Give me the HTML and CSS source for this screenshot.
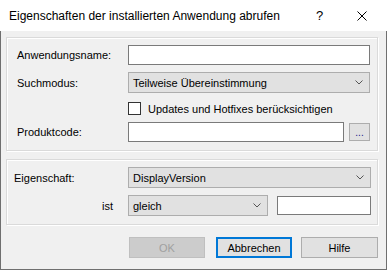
FILE: index.html
```html
<!DOCTYPE html>
<html lang="de">
<head>
<meta charset="utf-8">
<title>Eigenschaften der installierten Anwendung abrufen</title>
<link rel="stylesheet" href="styles.css">
</head>
<body>
<div class="window">
  <div class="titlebar">
    <span class="title">Eigenschaften der installierten Anwendung abrufen</span>
    <span class="help">?</span>
    <svg class="close" width="10" height="10" viewBox="0 0 10 10"><path d="M0.5 0.5 L9.5 9.5 M9.5 0.5 L0.5 9.5" stroke="#000" stroke-width="1" fill="none"/></svg>
  </div>
  <div class="client">
    <div class="group g1">
      <div class="row r1">
        <span class="lbl">Anwendungsname:</span>
        <div class="textbox w-full"></div>
      </div>
      <div class="row r2">
        <span class="lbl">Suchmodus:</span>
        <div class="combo w-full"><span>Teilweise Übereinstimmung</span><svg class="chev" width="8" height="5" viewBox="0 0 8 5"><path d="M0.5 0.5 L4 4 L7.5 0.5" stroke="#555" fill="none"/></svg></div>
      </div>
      <div class="row r3">
        <span class="lbl"></span>
        <div class="check"></div>
        <span class="checklbl">Updates und Hotfixes berücksichtigen</span>
      </div>
      <div class="row r4">
        <span class="lbl">Produktcode:</span>
        <div class="textbox w-code"></div>
        <div class="dots">...</div>
      </div>
    </div>
    <div class="group g2">
      <div class="row r5">
        <span class="lbl lbl2">Eigenschaft:</span>
        <div class="combo w-full2"><span>DisplayVersion</span><svg class="chev" width="8" height="5" viewBox="0 0 8 5"><path d="M0.5 0.5 L4 4 L7.5 0.5" stroke="#555" fill="none"/></svg></div>
      </div>
      <div class="row r6">
        <span class="lbl lbl-ist">ist</span>
        <div class="combo w-op"><span>gleich</span><svg class="chev" width="8" height="5" viewBox="0 0 8 5"><path d="M0.5 0.5 L4 4 L7.5 0.5" stroke="#555" fill="none"/></svg></div>
        <div class="textbox w-val"></div>
      </div>
    </div>
    <div class="buttons">
      <div class="btn disabled">OK</div>
      <div class="btn default">Abbrechen</div>
      <div class="btn help-btn">Hilfe</div>
    </div>
  </div>
</div>
</body>
</html>
```
FILE: styles.css
```css
* { box-sizing: border-box; }
html, body { margin: 0; padding: 0; background: #f0f0f0; }
body {
  font-family: "Liberation Sans", Arial, sans-serif;
  font-size: 11px;
  color: #000;
}
.window {
  width: 387px;
  height: 270px;
  background: #f0f0f0;
  border: 1px solid #6f6f6f;
  border-top: none;
  display: flex;
  flex-direction: column;
}
.titlebar {
  height: 31px;
  background: #fff;
  display: flex;
  align-items: center;
  padding-left: 8px;
  margin: 0 -1px;
  border-left: 1px solid #fff;
  border-right: 1px solid #fff;
}
.title {
  font-family: "Liberation Sans", Arial, sans-serif;
  font-size: 12px;
  color: #000;
  flex: none;
  padding-top: 1px;
}
.help {
  font-family: "Liberation Sans", Arial, sans-serif;
  font-size: 13px;
  width: 10px;
  margin-left: auto;
  margin-right: 31px;
}
.close { flex: none; margin-right: 19px; }
.client {
  padding: 6px 8px 0 5px;
  display: flex;
  flex-direction: column;
}
.group {
  border: 1px solid #dadada;
  box-shadow: inset 1px 1px 0 #fff, 1px 1px 0 #fff;
  width: 372px;
}
.g1 { height: 114px; padding-top: 7px; }
.g2 { height: 66px; margin-top: 8px; padding-top: 7px; }
.row { display: flex; align-items: center; }
.r1 { height: 20px; }
.r2 { height: 21px; margin-top: 7px; }
.r3 { height: 13px; margin-top: 9px; }
.r4 { height: 20px; margin-top: 7px; }
.r5 { height: 21px; }
.r6 { height: 21px; margin-top: 7px; }
.lbl {
  width: 121px;
  padding-left: 10px;
  flex: none;
}
.lbl2 { padding-left: 7px; }
.lbl-ist { text-align: right; padding-right: 15px; }
.textbox {
  height: 20px;
  background: #fff;
  border: 1px solid #7a7a7a;
}
.w-full { width: 242px; }
.w-code { width: 216px; }
.w-full2 { width: 243px; }
.w-op { width: 140px; }
.w-val { width: 94px; height: 19px; margin-left: 9px; }
.combo {
  height: 21px;
  background: #e1e1e1;
  border: 1px solid #adadad;
  display: flex;
  align-items: center;
  padding-left: 4px;
  padding-right: 6px;
}
.combo span { flex: 1; }
.chev { flex: none; }
.check {
  width: 13px;
  height: 13px;
  background: #fff;
  border: 1px solid #333;
}
.checklbl { margin-left: 7px; }
.dots {
  width: 21px;
  height: 18px;
  margin-left: 5px;
  background: #e1e1e1;
  border: 1px solid #adadad;
  text-align: center;
  line-height: 18px;
  color: #1a1a8a;
  font-size: 10px;
}
.buttons {
  display: flex;
  justify-content: flex-end;
  margin-top: 12px;
  padding-right: 0;
}
.btn {
  height: 21px;
  width: 76px;
  background: #e1e1e1;
  border: 1px solid #adadad;
  display: flex;
  align-items: center;
  justify-content: center;
}
.btn.disabled {
  background: #cccccc;
  border-color: #bfbfbf;
  color: #a0a0a0;
}
.btn.default {
  border: 2px solid #0078d7;
  margin-left: 11px;
}
.btn.help-btn { margin-left: 9px; width: 77px; }
```
